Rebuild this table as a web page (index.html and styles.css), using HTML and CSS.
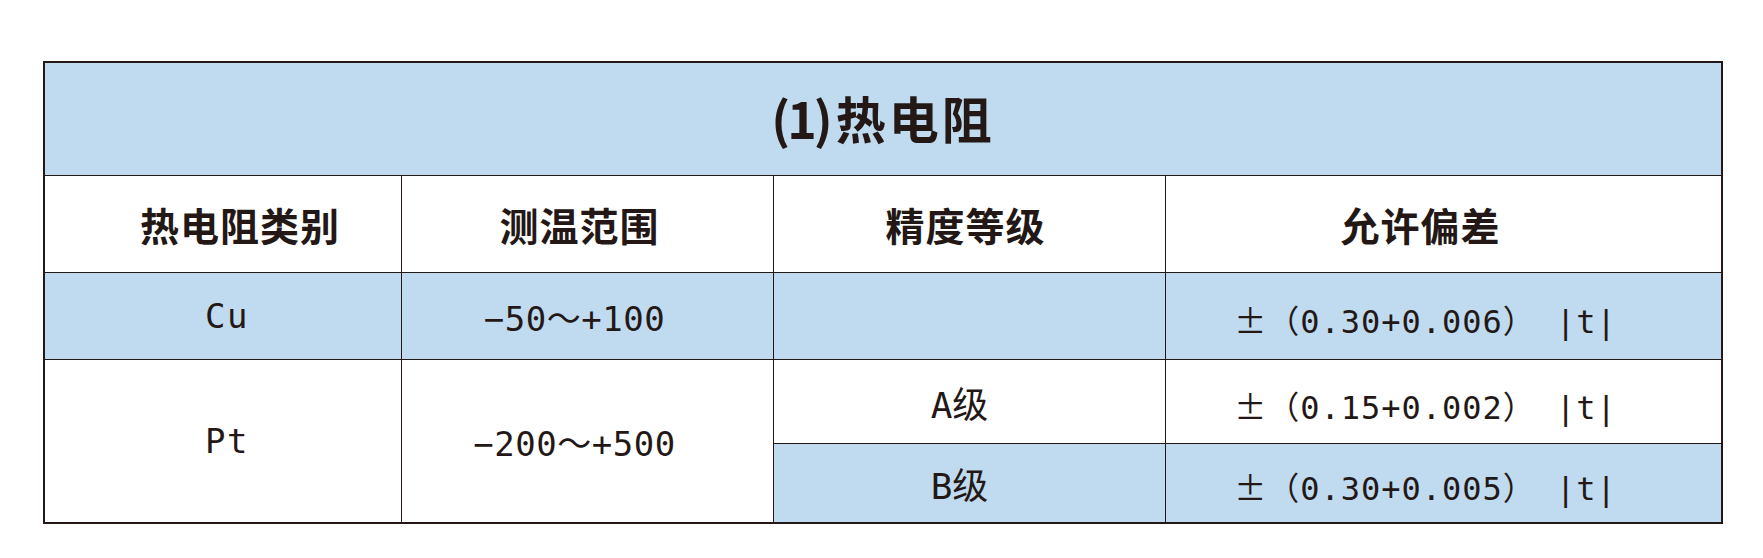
FILE: index.html
```html
<!DOCTYPE html>
<html lang="zh-CN">
<head>
<meta charset="utf-8">
<title>热电阻</title>
<link rel="stylesheet" href="styles.css">
</head>
<body>
<table class="spec">
  <colgroup>
    <col class="c1"><col class="c2"><col class="c3"><col class="c4">
  </colgroup>
  <tr class="r-title">
    <td class="title blue last-col" colspan="4"><span class="num">(1)</span>热电阻</td>
  </tr>
  <tr class="r-head">
    <td class="head h1">热电阻类别</td>
    <td class="head h2">测温范围</td>
    <td class="head h3">精度等级</td>
    <td class="head h4 last-col">允许偏差</td>
  </tr>
  <tr class="r-cu">
    <td class="data d1 blue wide">Cu</td>
    <td class="data d2 blue">−50～+100</td>
    <td class="data d3 blue"></td>
    <td class="data d4 blue last-col"><span class="pm">±</span>（0.30+0.006） |t|</td>
  </tr>
  <tr class="r-a">
    <td class="data d1 wide last-row" rowspan="2">Pt</td>
    <td class="data d2 last-row" rowspan="2">−200～+500</td>
    <td class="data d3 grade">A级</td>
    <td class="data d4 last-col"><span class="pm">±</span>（0.15+0.002） |t|</td>
  </tr>
  <tr class="r-b">
    <td class="data d3 grade blue last-row">B级</td>
    <td class="data d4 blue last-col last-row"><span class="pm">±</span>（0.30+0.005） |t|</td>
  </tr>
</table>
</body>
</html>
```
FILE: styles.css
```css
html, body {
  margin: 0;
  padding: 0;
  background: #ffffff;
}

body {
  padding: 61px 0 0 43px;
  color: #231815;
  font-family: "Noto Sans CJK SC", "Noto Sans", sans-serif;
}

.spec {
  width: 1680px;
  table-layout: fixed;
  border-collapse: separate;
  border-spacing: 0;
  border: 2px solid #231815;
}

.c1 { width: 357px; }
.c2 { width: 372px; }
.c3 { width: 392px; }
.c4 { width: 555px; }

.spec td {
  padding: 0;
  text-align: center;
  vertical-align: middle;
  border-right: 1px solid #231815;
  border-bottom: 1px solid #231815;
  white-space: nowrap;
}

.spec td.last-col { border-right: none; }
.spec td.last-row { border-bottom: none; }

.blue { background: #c0daf0; }

.r-title { height: 113px; }
.r-head { height: 97px; }
.r-cu { height: 87px; }
.r-a { height: 84px; }
.r-b { height: 78px; }

.title {
  font-size: 50px;
  font-weight: 700;
  letter-spacing: 3px;
  padding-bottom: 4px !important;
}

.title .num {
  letter-spacing: -3px;
  margin-right: 6px;
}

.head {
  font-size: 39px;
  font-weight: 700;
  letter-spacing: 1px;
}

.h1 { padding-left: 34px !important; }
.h2 { padding-right: 16px !important; }
.h3 { padding-right: 8px !important; }
.h4 { padding-right: 46px !important; }

.data {
  font-family: "DejaVu Sans Mono", "Noto Sans CJK SC", monospace;
  font-size: 34px;
}

.d1 { padding-left: 8px !important; letter-spacing: 1.5px; }
.d2 { padding-right: 26px !important; letter-spacing: 0.5px; }
.d3 { padding-right: 20px !important; }
.d4 {
  padding-right: 36px !important;
  padding-top: 6px !important;
  font-size: 32px;
  letter-spacing: 1px;
}

.grade { font-size: 36px; }

.pm {
  font-family: "Noto Sans CJK SC", sans-serif;
  font-feature-settings: "fwid";
}
```
